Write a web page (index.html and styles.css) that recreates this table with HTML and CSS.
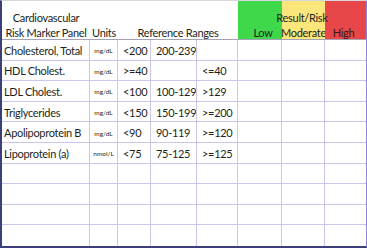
FILE: index.html
```html
<!DOCTYPE html>
<html>
<head>
<meta charset="utf-8">
<link rel="stylesheet" href="styles.css">
</head>
<body>
<div class="panel">
  <div class="head">
    <div class="h h-title1">Cardiovascular</div>
    <div class="h h-title2 hb">Risk Marker Panel</div>
    <div class="h h-units hb">Units</div>
    <div class="h h-ref hb">Reference Ranges</div>
    <div class="h h-low hb">Low</div>
    <div class="h h-mod hb">Moderate</div>
    <div class="h h-high hb">High</div>
    <div class="h h-result">Result/Risk</div>
  </div>
  <div class="rows">
    <div class="c name">Cholesterol, Total</div><div class="c unit">mg/dL</div><div class="c v">&lt;200</div><div class="c v">200-239</div><div class="c v"></div><div class="c"></div><div class="c"></div><div class="c last"></div>
    <div class="c name">HDL Cholest.</div><div class="c unit">mg/dL</div><div class="c v">&gt;=40</div><div class="c v"></div><div class="c v">&lt;=40</div><div class="c"></div><div class="c"></div><div class="c last"></div>
    <div class="c name">LDL Cholest.</div><div class="c unit">mg/dL</div><div class="c v">&lt;100</div><div class="c v">100-129</div><div class="c v">&gt;129</div><div class="c"></div><div class="c"></div><div class="c last"></div>
    <div class="c name">Triglycerides</div><div class="c unit">mg/dL</div><div class="c v">&lt;150</div><div class="c v">150-199</div><div class="c v">&gt;=200</div><div class="c"></div><div class="c"></div><div class="c last"></div>
    <div class="c name">Apolipoprotein B</div><div class="c unit">mg/dL</div><div class="c v">&lt;90</div><div class="c v">90-119</div><div class="c v">&gt;=120</div><div class="c"></div><div class="c"></div><div class="c last"></div>
    <div class="c name">Lipoprotein (a)</div><div class="c unit">nmol/L</div><div class="c v">&lt;75</div><div class="c v">75-125</div><div class="c v">&gt;=125</div><div class="c"></div><div class="c"></div><div class="c last"></div>
    <div class="c name"></div><div class="c unit"></div><div class="c v"></div><div class="c v"></div><div class="c v"></div><div class="c"></div><div class="c"></div><div class="c last"></div>
    <div class="c name"></div><div class="c unit"></div><div class="c v"></div><div class="c v"></div><div class="c v"></div><div class="c"></div><div class="c"></div><div class="c last"></div>
    <div class="c name"></div><div class="c unit"></div><div class="c v"></div><div class="c v"></div><div class="c v"></div><div class="c"></div><div class="c"></div><div class="c last"></div>
    <div class="c name bottom"></div><div class="c unit bottom"></div><div class="c v bottom"></div><div class="c v bottom"></div><div class="c v bottom"></div><div class="c bottom"></div><div class="c bottom"></div><div class="c last bottom"></div>
  </div>
</div>
</body>
</html>
```

FILE: styles.css
```css
html, body {
  margin: 0;
  padding: 0;
  background: #ffffff;
}
body {
  font-family: "Lato", "Open Sans", sans-serif;
  color: #231f20;
}
.panel {
  box-sizing: border-box;
  width: 367px;
  height: 248px;
  border-left: 2px solid #3d3f7a;
  border-bottom: 2px solid #3d3f7a;
  border-top: 1px solid #d6d6de;
  border-right: 1px solid #8b84e0;
  display: flex;
  flex-direction: column;
}
.head, .rows {
  display: grid;
  grid-template-columns: 88px 28px 33px 46px 41px 44px 43px 41px;
}
.head {
  grid-template-rows: 23px 16px;
}
.rows {
  grid-template-rows: repeat(10, 1fr);
  flex: 1;
}
.h {
  font-size: 11px;
  line-height: 13px;
  letter-spacing: -0.3px;
  display: flex;
  align-items: flex-end;
  justify-content: center;
  padding-bottom: 0;
  box-sizing: border-box;
  white-space: nowrap;
}
.hb {
  border-bottom: 1px solid #a4a2b4;
}
.h-title1 { grid-column: 1; grid-row: 1; }
.h-title2 { grid-column: 1; grid-row: 2; }
.h-units { grid-column: 2; grid-row: 2; }
.h-ref { grid-column: 3 / 6; grid-row: 2; }
.h-low { grid-column: 6; grid-row: 1 / 3; background: #3fd84a; padding-left: 6px; }
.h-mod { grid-column: 7; grid-row: 1 / 3; background: #fbe67c; }
.h-high { grid-column: 8; grid-row: 1 / 3; background: #e8474a; color: #3a1416; padding-right: 4px; }
.h-result { grid-column: 6 / 9; grid-row: 1; z-index: 1; }
.c {
  border-right: 1px solid #cbc6ec;
  border-bottom: 1px solid #cbc6ec;
  font-size: 11px;
  letter-spacing: -0.3px;
  display: flex;
  align-items: center;
  padding-top: 1px;
  white-space: nowrap;
  overflow: hidden;
}
.c.last { border-right: none; }
.c.bottom { border-bottom: none; }
.name { padding-left: 2px; }
.unit { font-size: 6.5px; letter-spacing: 0; justify-content: center; padding-top: 2px; }
.v { padding-left: 5px; }
```
